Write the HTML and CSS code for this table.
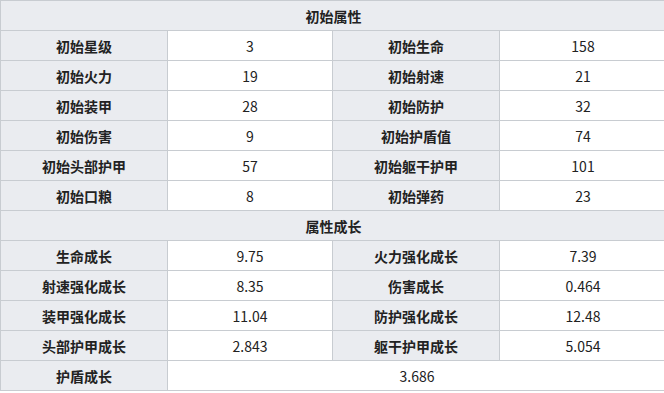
FILE: index.html
```html
<!DOCTYPE html>
<html lang="zh">
<head>
<meta charset="utf-8">
<link rel="stylesheet" href="styles.css">
</head>
<body>
<table class="stats">
  <colgroup><col class="c1"><col class="c2"><col class="c3"><col class="c4"></colgroup>
  <tr><th class="head" colspan="4">初始属性</th></tr>
  <tr><th>初始星级</th><td>3</td><th>初始生命</th><td>158</td></tr>
  <tr><th>初始火力</th><td>19</td><th>初始射速</th><td>21</td></tr>
  <tr><th>初始装甲</th><td>28</td><th>初始防护</th><td>32</td></tr>
  <tr><th>初始伤害</th><td>9</td><th>初始护盾值</th><td>74</td></tr>
  <tr><th>初始头部护甲</th><td>57</td><th>初始躯干护甲</th><td>101</td></tr>
  <tr><th>初始口粮</th><td>8</td><th>初始弹药</th><td>23</td></tr>
  <tr><th class="head" colspan="4">属性成长</th></tr>
  <tr><th>生命成长</th><td>9.75</td><th>火力强化成长</th><td>7.39</td></tr>
  <tr><th>射速强化成长</th><td>8.35</td><th>伤害成长</th><td>0.464</td></tr>
  <tr><th>装甲强化成长</th><td>11.04</td><th>防护强化成长</th><td>12.48</td></tr>
  <tr><th>头部护甲成长</th><td>2.843</td><th>躯干护甲成长</th><td>5.054</td></tr>
  <tr><th>护盾成长</th><td colspan="3">3.686</td></tr>
</table>
</body>
</html>
```
FILE: styles.css
```css
html, body {
  margin: 0;
  padding: 0;
  background: #ffffff;
}
body {
  font-family: "Noto Sans CJK SC", "Microsoft YaHei", sans-serif;
  font-size: 14px;
  color: #222222;
}
.stats {
  border-collapse: collapse;
  table-layout: fixed;
  width: 666px;
}
.c1 { width: 167px; }
.c2 { width: 165px; }
.c3 { width: 167px; }
.c4 { width: 167px; }
.stats th,
.stats td {
  border: 1px solid #c8ccd1;
  height: 29px;
  padding: 0;
  text-align: center;
  vertical-align: middle;
  line-height: 20px;
}
.stats th {
  background: #eaecf0;
  font-weight: bold;
}
.stats td {
  background: #ffffff;
  font-weight: normal;
}
```
